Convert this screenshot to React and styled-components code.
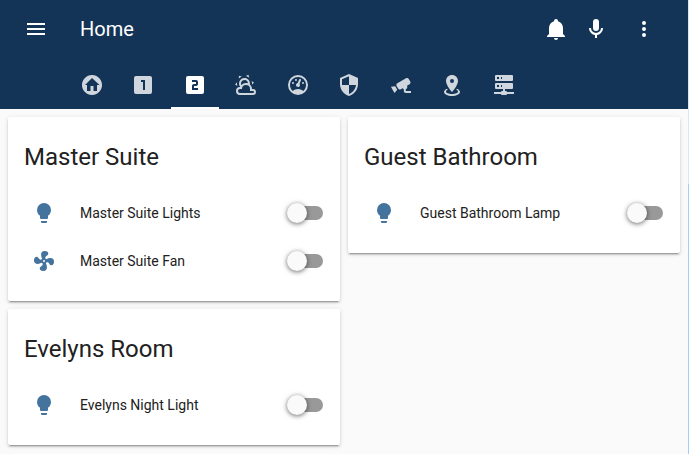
import React, { useState } from 'react';
import styled, { createGlobalStyle } from 'styled-components';

const paths = {
  menu: 'M3,6H21V8H3V6M3,11H21V13H3V11M3,16H21V18H3V16Z',
  bell: 'M21,19V20H3V19L5,17V11C5,7.9 7.03,5.17 10,4.29C10,4.19 10,4.1 10,4A2,2 0 0,1 12,2A2,2 0 0,1 14,4C14,4.1 14,4.19 14,4.29C16.97,5.17 19,7.9 19,11V17L21,19M14,21A2,2 0 0,1 12,23A2,2 0 0,1 10,21',
  microphone: 'M12,2A3,3 0 0,1 15,5V11A3,3 0 0,1 12,14A3,3 0 0,1 9,11V5A3,3 0 0,1 12,2M19,11C19,14.53 16.39,17.44 13,17.93V21H11V17.93C7.61,17.44 5,14.53 5,11H7A5,5 0 0,0 12,16A5,5 0 0,0 17,11H19Z',
  dots: 'M12,16A2,2 0 0,1 14,18A2,2 0 0,1 12,20A2,2 0 0,1 10,18A2,2 0 0,1 12,16M12,10A2,2 0 0,1 14,12A2,2 0 0,1 12,14A2,2 0 0,1 10,12A2,2 0 0,1 12,10M12,4A2,2 0 0,1 14,6A2,2 0 0,1 12,8A2,2 0 0,1 10,6A2,2 0 0,1 12,4Z',
  home: 'M19.07,4.93C17.22,3 14.66,1.96 12,2C9.34,1.96 6.79,3 4.94,4.93C3,6.78 1.96,9.34 2,12C1.96,14.66 3,17.21 4.93,19.06C6.78,21 9.34,22.04 12,22C14.66,22.04 17.21,21 19.06,19.07C21,17.22 22.04,14.66 22,12C22.04,9.34 21,6.78 19.07,4.93M17,12V18H13.5V13H10.5V18H7V12H5L12,5L19.5,12H17Z',
  one: 'M14,17H12V9H10V7H14M19,3H5A2,2 0 0,0 3,5V19A2,2 0 0,0 5,21H19A2,2 0 0,0 21,19V5C21,3.89 20.1,3 19,3Z',
  two: 'M15,11C15,12.11 14.1,13 13,13H11V15H15V17H9V13C9,11.89 9.9,11 11,11H13V9H9V7H13A2,2 0 0,1 15,9M19,3H5A2,2 0 0,0 3,5V19A2,2 0 0,0 5,21H19A2,2 0 0,0 21,19V5C21,3.89 20.1,3 19,3Z',
  weather: 'M12.74,5.47C15.1,6.5 16.35,9.03 15.92,11.46C17.19,12.56 18,14.19 18,16V16.17C18.31,16.06 18.65,16 19,16A3,3 0 0,1 22,19A3,3 0 0,1 19,22H6A4,4 0 0,1 2,18A4,4 0 0,1 6,14H6.27C5,12.45 4.6,10.24 5.5,8.26C6.72,5.5 9.97,4.24 12.74,5.47M11.93,7.3C10.16,6.5 8.09,7.31 7.31,9.07C6.85,10.09 6.93,11.22 7.41,12.13C8.5,10.83 10.16,10 12,10C12.7,10 13.38,10.12 14,10.34C13.94,9.06 13.18,7.86 11.93,7.3M13.55,3.64C13,3.4 12.45,3.23 11.88,3.12L14.37,1.82L15.27,4.71C14.76,4.29 14.19,3.93 13.55,3.64M6.09,4.44C5.6,4.79 5.17,5.19 4.8,5.63L4.91,2.82L7.87,3.5C7.25,3.71 6.65,4.03 6.09,4.44M18,9.71C17.91,9.12 17.78,8.55 17.59,8L19.97,9.5L17.92,11.73C18.03,11.08 18.05,10.4 18,9.71M3.04,11.3C3.11,11.9 3.24,12.47 3.43,13L1.06,11.5L3.1,9.28C3,9.93 2.97,10.61 3.04,11.3M19,18H16V16A4,4 0 0,0 12,12A4,4 0 0,0 8,16H6A2,2 0 0,0 4,18A2,2 0 0,0 6,20H19A1,1 0 0,0 20,19A1,1 0 0,0 19,18Z',
  gauge: 'M12,2A10,10 0 0,0 2,12A10,10 0 0,0 12,22A10,10 0 0,0 22,12A10,10 0 0,0 12,2M12,4A8,8 0 0,1 20,12C20,14.4 19,16.5 17.3,18C15.9,16.7 14,16 12,16C10,16 8.2,16.7 6.7,18C5,16.5 4,14.4 4,12A8,8 0 0,1 12,4M14,5.89C13.62,5.9 13.26,6.15 13.1,6.54L11.81,9.77L11.71,10C11,10.13 10.41,10.6 10.14,11.26C9.73,12.29 10.23,13.45 11.26,13.86C12.29,14.27 13.45,13.77 13.86,12.74C14.12,12.08 14,11.32 13.57,10.76L13.67,10.5L14.96,7.29L14.97,7.26C15.17,6.75 14.92,6.17 14.41,5.96C14.28,5.91 14.15,5.89 14,5.89M10,6A1,1 0 0,0 9,7A1,1 0 0,0 10,8A1,1 0 0,0 11,7A1,1 0 0,0 10,6M7,9A1,1 0 0,0 6,10A1,1 0 0,0 7,11A1,1 0 0,0 8,10A1,1 0 0,0 7,9M17,9A1,1 0 0,0 16,10A1,1 0 0,0 17,11A1,1 0 0,0 18,10A1,1 0 0,0 17,9Z',
  shield: 'M12,12H19C18.47,16.11 15.72,19.78 12,20.92V12H5V6.3L12,3.19M12,1L3,5V11C3,16.55 6.84,21.73 12,23C17.16,21.73 21,16.55 21,11V5L12,1Z',
  camera: 'M18.15,4.94C17.77,4.91 17.37,5 17,5.2L8.35,10.2C7.39,10.76 7.07,12 7.62,12.94L9.12,15.53C9.67,16.5 10.89,16.82 11.85,16.27L13.65,15.23C13.92,15.69 14.32,16.06 14.81,16.27V18.04C14.81,19.13 15.7,20 16.81,20H22V18.04H16.81V16.27C17.72,15.87 18.31,14.97 18.31,14C18.31,13.54 18.19,13.11 17.97,12.73L20.5,11.27C21.47,10.71 21.8,9.5 21.24,8.53L19.74,5.94C19.4,5.34 18.79,5 18.15,4.94M6.22,13.17L2,13.87L2.75,15.17L4.75,18.63L5.5,19.93L8.22,16.63L6.22,13.17Z',
  map: 'M12,2C15.31,2 18,4.66 18,7.95C18,12.41 12,19 12,19C12,19 6,12.41 6,7.95C6,4.66 8.69,2 12,2M12,6A2,2 0 0,0 10,8A2,2 0 0,0 12,10A2,2 0 0,0 14,8A2,2 0 0,0 12,6M20,19C20,21.21 16.42,23 12,23C7.58,23 4,21.21 4,19C4,17.71 5.22,16.56 7.11,15.83L7.75,16.74C6.67,17.19 6,17.81 6,18.5C6,19.88 8.69,21 12,21C15.31,21 18,19.88 18,18.5C18,17.81 17.33,17.19 16.25,16.74L16.89,15.83C18.78,16.56 20,17.71 20,19Z',
  server: 'M13,18H14A1,1 0 0,1 15,19H22V21H15A1,1 0 0,1 14,22H10A1,1 0 0,1 9,21H2V19H9A1,1 0 0,1 10,18H11V16H4A1,1 0 0,1 3,15V11A1,1 0 0,1 4,10H20A1,1 0 0,1 21,11V15A1,1 0 0,1 20,16H13V18M4,2H20A1,1 0 0,1 21,3V7A1,1 0 0,1 20,8H4A1,1 0 0,1 3,7V3A1,1 0 0,1 4,2M9,6H10V4H9V6M9,14H10V12H9V14M5,4V6H7V4H5M5,12V14H7V12H5Z',
  bulb: 'M12,2A7,7 0 0,0 5,9C5,11.38 6.19,13.47 8,14.74V17A1,1 0 0,0 9,18H15A1,1 0 0,0 16,17V14.74C17.81,13.47 19,11.38 19,9A7,7 0 0,0 12,2M9,21A1,1 0 0,0 10,22H14A1,1 0 0,0 15,21V20H9V21Z',
  fan: 'M12,11A1,1 0 0,0 11,12A1,1 0 0,0 12,13A1,1 0 0,0 13,12A1,1 0 0,0 12,11M12.5,2C17,2 17.11,5.57 14.75,6.75C13.76,7.24 13.32,8.29 13.13,9.22C13.61,9.42 14.03,9.73 14.35,10.13C18.05,8.13 22.03,8.92 22.03,12.5C22.03,17 18.46,17.1 17.28,14.73C16.78,13.74 15.72,13.3 14.79,13.11C14.59,13.59 14.28,14 13.88,14.34C15.87,18.03 15.08,22 11.5,22C7,22 6.91,18.42 9.27,17.24C10.25,16.75 10.69,15.71 10.89,14.79C10.4,14.59 9.97,14.27 9.65,13.87C5.96,15.85 2,15.07 2,11.5C2,7 5.56,6.89 6.74,9.26C7.24,10.25 8.29,10.68 9.22,10.87C9.41,10.39 9.73,9.97 10.14,9.65C8.15,5.96 8.94,2 12.5,2Z',
};

const GlobalStyle = createGlobalStyle`
  *, *::before { box-sizing: border-box; }
  body {
    margin: 0;
    background: #fafafa;
    color: #212121;
    font-family: Roboto, sans-serif;
    font-size: 14px;
  }
`;

const Page = styled.div`
  min-height: 100vh;
  border-right: 1px solid;
  border-image: linear-gradient(#d5e7fb 184px, #a3ccf9 184px) 1;
`;

const Header = styled.header`
  background: #133456;
  color: #fff;
`;

const Toolbar = styled.div`
  display: flex;
  align-items: center;
  height: 58px;
  padding: 0 24px 0 16px;
`;

const IconButton = styled.button`
  display: grid;
  place-items: center;
  width: 40px;
  height: 40px;
  padding: 0;
  border: 0;
  background: none;
  color: inherit;
  cursor: pointer;
`;

const Title = styled.h1`
  flex: 1;
  margin: 0 0 0 24px;
  font-size: 20px;
  font-weight: 400;
  line-height: 40px;
`;

const OverflowButton = styled(IconButton)`
  margin-left: 8px;
`;

const Tabs = styled.nav`
  padding: 3px 16px 0 68px;
  white-space: nowrap;
`;

const Tab = styled.button`
  display: inline-block;
  width: 48px;
  height: 48px;
  padding: 2px 0 0;
  border: 0;
  border-bottom: 2px solid ${(p) => (p.$active ? '#fff' : 'transparent')};
  background: none;
  color: ${(p) => (p.$active ? '#fff' : '#d0d6dd')};
  vertical-align: top;
  cursor: pointer;
`;

const Glyph = styled.svg`
  display: block;
  flex: none;
  width: 24px;
  height: 24px;
  margin: 0 auto;
  fill: currentColor;
`;

const Columns = styled.main`
  display: grid;
  grid-template-columns: 1fr 1fr;
  align-items: start;
  gap: 8px;
  padding: 8px;
`;

const Column = styled.div`
  display: grid;
  gap: 8px;
`;

const Card = styled.section`
  padding: 24px 16px 16px;
  border-radius: 2px;
  background: #fff;
  box-shadow: 0 2px 2px 0 rgba(0, 0, 0, 0.14), 0 1px 5px 0 rgba(0, 0, 0, 0.12),
    0 3px 1px -2px rgba(0, 0, 0, 0.2);
`;

const CardTitle = styled.h2`
  margin: 0 0 16px;
  font-size: 24px;
  font-weight: 400;
  line-height: 32px;
`;

const EntityRow = styled.label`
  display: flex;
  align-items: center;
  height: 48px;
  cursor: pointer;
`;

const EntityIcon = styled.span`
  width: 40px;
  color: #44739e;
`;

const EntityName = styled.span`
  flex: 1;
  margin-left: 16px;
  line-height: 20px;
`;

const Toggle = styled.input.attrs({ type: 'checkbox' })`
  appearance: none;
  width: 34px;
  height: 14px;
  margin: 0 1px 0 0;
  border-radius: 7px;
  background: ${(p) => (p.checked ? '#a1b9ce' : '#999')};
  cursor: pointer;

  &::before {
    content: '';
    display: block;
    width: 20px;
    height: 20px;
    margin: -3px 0 0 ${(p) => (p.checked ? '16px' : '-2px')};
    border-radius: 50%;
    background: ${(p) => (p.checked ? '#44739e' : '#fafafa')};
    box-shadow: 0 1px 5px 0 rgba(0, 0, 0, 0.6);
  }
`;

const Icon = ({ name }) => (
  <Glyph viewBox="0 0 24 24" aria-hidden="true">
    <path d={paths[name]} />
  </Glyph>
);

const tabs = [
  ['home', 'Home'],
  ['one', 'First floor'],
  ['two', 'Second floor'],
  ['weather', 'Weather'],
  ['gauge', 'Climate'],
  ['shield', 'Security'],
  ['camera', 'Cameras'],
  ['map', 'Map'],
  ['server', 'Network'],
];

const columns = [
  [
    {
      title: 'Master Suite',
      entities: [
        ['bulb', 'Master Suite Lights'],
        ['fan', 'Master Suite Fan'],
      ],
    },
    { title: 'Evelyns Room', entities: [['bulb', 'Evelyns Night Light']] },
  ],
  [{ title: 'Guest Bathroom', entities: [['bulb', 'Guest Bathroom Lamp']] }],
];

function Entity({ icon, name }) {
  const [on, setOn] = useState(false);
  return (
    <EntityRow>
      <EntityIcon>
        <Icon name={icon} />
      </EntityIcon>
      <EntityName>{name}</EntityName>
      <Toggle checked={on} onChange={(e) => setOn(e.target.checked)} />
    </EntityRow>
  );
}

export default function App() {
  const [active, setActive] = useState('two');
  return (
    <Page>
      <GlobalStyle />
      <Header>
        <Toolbar>
          <IconButton aria-label="Menu">
            <Icon name="menu" />
          </IconButton>
          <Title>Home</Title>
          <IconButton aria-label="Notifications">
            <Icon name="bell" />
          </IconButton>
          <IconButton aria-label="Voice command">
            <Icon name="microphone" />
          </IconButton>
          <OverflowButton aria-label="More options">
            <Icon name="dots" />
          </OverflowButton>
        </Toolbar>
        <Tabs>
          {tabs.map(([icon, label]) => (
            <React.Fragment key={icon}>
              <Tab
                aria-label={label}
                aria-pressed={active === icon}
                $active={active === icon}
                onClick={() => setActive(icon)}
              >
                <Icon name={icon} />
              </Tab>{' '}
            </React.Fragment>
          ))}
        </Tabs>
      </Header>
      <Columns>
        {columns.map((cards, i) => (
          <Column key={i}>
            {cards.map((card) => (
              <Card key={card.title}>
                <CardTitle>{card.title}</CardTitle>
                {card.entities.map(([icon, name]) => (
                  <Entity key={name} icon={icon} name={name} />
                ))}
              </Card>
            ))}
          </Column>
        ))}
      </Columns>
    </Page>
  );
}
